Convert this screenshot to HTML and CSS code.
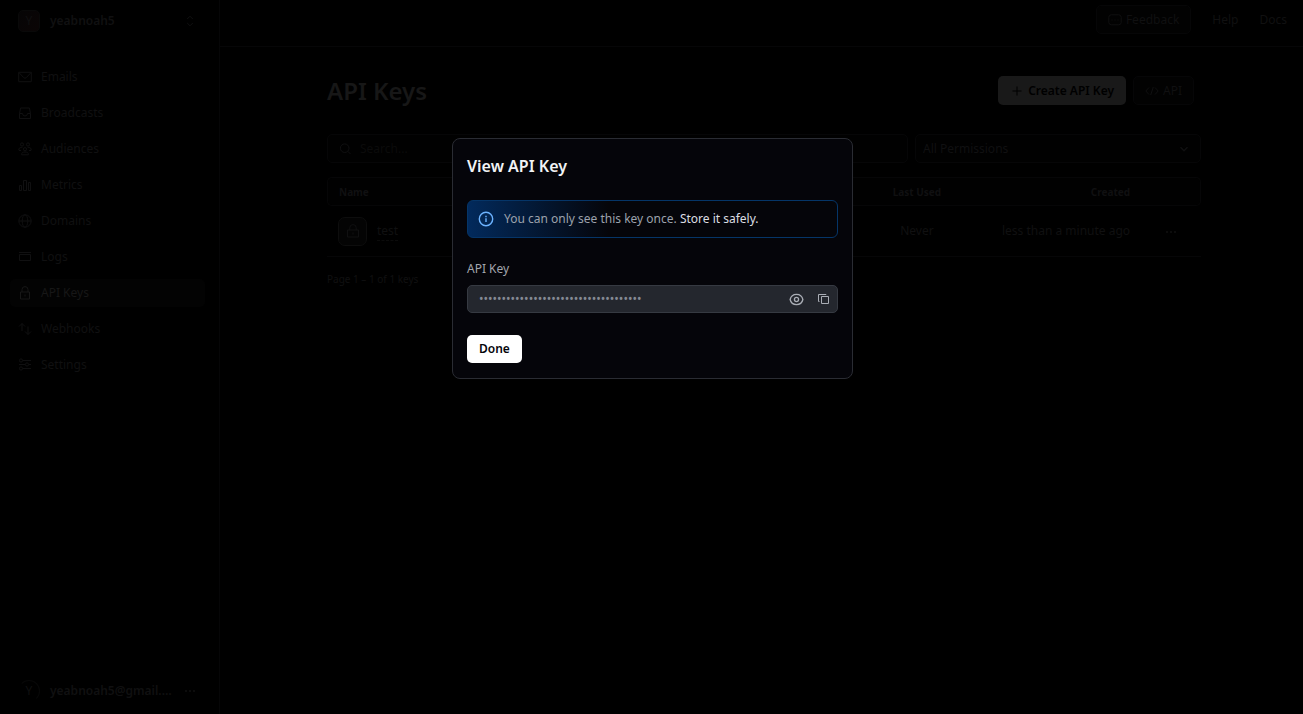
FILE: index.html
```html
<!DOCTYPE html>
<html lang="en">
<head>
<meta charset="utf-8">
<title>API Keys</title>
<link rel="stylesheet" href="styles.css">
</head>
<body>
<div class="app">
  <aside class="sidebar">
    <button class="team" type="button">
      <span class="team-logo">Y</span>
      <span class="account-name">yeabnoah5</span>
      <svg class="icon" viewBox="0 0 14 14"><path d="M4.2 5 7 2.200 9.800 5M4.200 9 7 11.800 9.800 9"/></svg>
    </button>
    <nav class="nav">
      <a class="nav-item" href="#"><svg class="icon" viewBox="0 0 14 14"><path d="M.7 2.300h12.600v9.400H.7zM1 2.600l4.700 5a1.800 1.800 0 0 0 2.600 0l4.700-5"/></svg>Emails</a>
      <a class="nav-item" href="#"><svg class="icon" viewBox="0 0 14 14"><path d="M1.500 7.500 2.600 2h8.800l1.100 5.500v5h-11zM1.500 7.500h3a2.500 2.500 0 0 0 5 0h3"/></svg>Broadcasts</a>
      <a class="nav-item" href="#"><svg class="icon" viewBox="0 0 14 14"><circle cx="4" cy="2.500" r="1.600"/><circle cx="10" cy="2.500" r="1.600"/><circle cx="7" cy="7.200" r="1.600"/><path d="M.8 8.200c0-2 .8-2.700 2.500-2.700h1M13.200 8.200c0-2-.8-2.700-2.500-2.700h-1M1 8.500h2M11 8.500h2M3.600 12.800c0-2 1-2.800 3.400-2.800s3.400.8 3.400 2.800z"/></svg>Audiences</a>
      <a class="nav-item" href="#"><svg class="icon" viewBox="0 0 14 14"><path d="M1.500 7.500h2v5h-2zM5.500 2.500h3v10h-3zM10.500 4.500h2v8h-2z"/></svg>Metrics</a>
      <a class="nav-item" href="#"><svg class="icon" viewBox="0 0 14 14"><circle cx="7" cy="7" r="6.200"/><ellipse cx="7" cy="7" rx="2.800" ry="6.200"/><path d="M.8 7h12.400"/></svg>Domains</a>
      <a class="nav-item" href="#"><svg class="icon" viewBox="0 0 14 14"><path d="M1 2.500h12M1.500 4.500h11v6h-11z"/></svg>Logs</a>
      <a class="nav-item nav-item-active" href="#"><svg class="icon" viewBox="0 0 14 14"><path d="M2.500 6h9v7h-9zM4 6V3.600a3 3 0 0 1 6 0V6M7 8.500v2"/></svg>API Keys</a>
      <a class="nav-item" href="#"><svg class="icon" viewBox="0 0 14 14"><path d="M4 9V1.500M1 4.500l3-3 3 3M10 4.500V12.500M7 9.500l3 3 3-3"/></svg>Webhooks</a>
      <a class="nav-item" href="#"><svg class="icon" viewBox="0 0 14 14"><circle cx="3" cy="2.500" r="1.600"/><circle cx="9" cy="6.500" r="1.600"/><circle cx="3" cy="10.500" r="1.600"/><path d="M4.600 2.500H13M1 6.500h6.400M10.600 6.500H13M4.600 10.500H13"/></svg>Settings</a>
    </nav>
    <button class="user" type="button">
      <span class="avatar">Y</span>
      <span class="account-name">yeabnoah5@gmail.…</span>
      <svg class="icon icon-dots" viewBox="0 0 14 14"><circle cx="3" cy="7" r="1"/><circle cx="7" cy="7" r="1"/><circle cx="11" cy="7" r="1"/></svg>
    </button>
  </aside>

  <div class="main">
    <header class="topbar">
      <button class="btn btn-ghost" type="button"><svg class="icon" viewBox="0 0 14 14"><rect x=".8" y="1.800" width="12.400" height="10" rx="2.500"/><path d="M4 6.500v1M7 6.500v1M10 6.500v1"/></svg>Feedback</button>
      <a class="top-link" href="#">Help</a>
      <a class="top-link" href="#">Docs</a>
    </header>
    <main class="content">
      <div class="heading">
        <h1 class="page-title">API Keys</h1>
        <button class="btn btn-create" type="button"><svg class="icon" viewBox="0 0 14 14"><path d="M7 2.500v9M2.500 7h9"/></svg>Create API Key</button>
        <button class="btn btn-ghost" type="button"><svg class="icon" viewBox="0 0 14 14"><path d="M4 3.500.8 7 4 10.500M10 3.500 13.200 7 10 10.500M8.300 3 5.700 11"/></svg>API</button>
      </div>
      <div class="filters">
        <label class="search">
          <svg class="icon" viewBox="0 0 14 14"><circle cx="6.700" cy="6.200" r="4.300"/><path d="m9.800 9.300 2.700 2.700"/></svg>
          <input class="search-input" type="text" placeholder="Search..." aria-label="Search">
        </label>
        <div class="select-wrap">
          <select class="select" aria-label="Permissions"><option>All Permissions</option></select>
          <svg class="icon select-arrow" viewBox="0 0 14 14"><path d="m3.500 5.200 3.500 3.500 3.500-3.500"/></svg>
        </div>
      </div>
      <table class="keys">
        <thead>
          <tr><th class="col-name">Name</th><th class="col-used">Last Used</th><th class="col-created">Created</th><th class="col-actions"></th></tr>
        </thead>
        <tbody>
          <tr>
            <td><div class="key-cell"><span class="key-icon"><svg class="icon" viewBox="0 0 14 14"><path d="M1.500 6h11v7h-11zM3.800 6V3.800a3.200 3.200 0 0 1 6.400 0V6M7 8.500v2"/></svg></span><a class="key-link" href="#">test</a></div></td>
            <td class="col-used">Never</td>
            <td class="col-created">less than a minute ago</td>
            <td class="col-actions"><button class="more" type="button" aria-label="More"><svg class="icon icon-dots" viewBox="0 0 14 14"><circle cx="3" cy="7" r="1"/><circle cx="7" cy="7" r="1"/><circle cx="11" cy="7" r="1"/></svg></button></td>
          </tr>
        </tbody>
      </table>
      <p class="pager">Page 1 – 1 of 1 keys</p>
    </main>
  </div>
</div>

<div class="overlay">
  <div class="dialog" role="dialog" aria-modal="true" aria-labelledby="dialog-title">
    <h2 class="dialog-title" id="dialog-title">View API Key</h2>
    <div class="notice">
      <svg class="notice-icon" viewBox="0 0 16 16"><circle cx="8" cy="8" r="6.700"/><path d="M8 7.300v3.700M8 4.800v1.400"/></svg>
      <p class="notice-text">You can only see this key once. <strong class="notice-strong">Store it safely.</strong></p>
    </div>
    <label class="field-label" for="api-key">API Key</label>
    <div class="key-field">
      <input class="key-input" id="api-key" type="password" value="re_000000000000000000000000000000000" readonly>
      <button class="icon-btn" type="button" aria-label="Show key"><svg class="icon-eye" viewBox="0 0 16 16"><path d="M1.200 8C2 4.500 4.800 2.500 8 2.500s6 2 6.800 5.500c-.8 3.500-3.600 5.500-6.800 5.500S2 11.500 1.200 8z"/><circle cx="8" cy="8" r="2.200"/></svg></button>
      <button class="icon-btn" type="button" aria-label="Copy key"><svg class="icon-copy" viewBox="0 0 12 12"><path d="M3.500 3.500h7v7h-7zM1.500 8.500h-1v-7h7.500v.5"/></svg></button>
    </div>
    <button class="btn-done" type="button">Done</button>
  </div>
</div>
</body>
</html>
```

FILE: styles.css
```css
* { box-sizing: border-box; }

body {
  margin: 0;
  background: #000;
  color: #101011;
  font: 12px/18px "Noto Sans", "Open Sans", sans-serif;
}

button, input, select { font: inherit; color: inherit; }
button { border: 0; padding: 0; background: none; }
a { color: inherit; text-decoration: none; }

.icon {
  width: 14px;
  height: 14px;
  flex: none;
  fill: none;
  stroke: currentColor;
  stroke-width: 1;
}
.icon-dots { fill: currentColor; stroke: none; }

.app { display: flex; min-height: 100vh; }

/* Sidebar */
.sidebar {
  display: flex;
  flex-direction: column;
  flex: none;
  width: 220px;
  padding: 10px 14px 12px 10px;
  border-right: 1px solid #060607;
}
.team, .user {
  display: flex;
  align-items: center;
  gap: 10px;
  padding: 0 8px;
  text-align: left;
}
.user { margin-top: auto; }
.team-logo, .avatar {
  flex: none;
  width: 22px;
  height: 22px;
  line-height: 20px;
  text-align: center;
  border: 1px solid #090909;
}
.team-logo {
  border-radius: 5px;
  background: linear-gradient(135deg, #060506, #0b0505);
}
.avatar {
  border-radius: 50%;
  border-color: #080808 #080808 #000 #000;
}
.account-name {
  flex: 1;
  white-space: nowrap;
  font-weight: 600;
}
.nav {
  display: flex;
  flex-direction: column;
  gap: 8px;
  margin-top: 31px;
}
.nav-item {
  display: flex;
  align-items: center;
  gap: 9px;
  height: 28px;
  padding: 0 8px;
  border-radius: 5px;
}
.nav-item-active { background: #030303; color: #171717; }

/* Top bar */
.main { flex: 1; min-width: 0; }
.topbar {
  display: flex;
  align-items: center;
  justify-content: flex-end;
  gap: 21px;
  padding: 5px 16px 12px;
  border-bottom: 1px solid #060607;
}
.btn {
  display: flex;
  align-items: center;
  gap: 4px;
  height: 29px;
  padding: 0 11px;
  border: 1px solid transparent;
  border-radius: 5px;
}
.btn-ghost { border-color: #060607; background: #020202; }

/* Content */
.content { padding: 29px 102px 0 107px; }
.heading {
  display: flex;
  align-items: center;
  gap: 7px;
  padding-right: 7px;
}
.page-title {
  flex: 1;
  margin: 0;
  color: #171717;
  font-size: 24px;
  line-height: 29px;
  font-weight: 600;
}
.btn-create {
  background: #191919;
  color: #000;
  font-weight: 600;
}

.filters {
  display: flex;
  gap: 7px;
  margin-top: 29px;
}
.search {
  display: flex;
  flex: 1;
  align-items: center;
  gap: 8px;
  height: 29px;
  padding: 0 10px;
  border: 1px solid #060607;
  border-radius: 5px;
  background: #010101;
}
.search-input {
  flex: 1;
  min-width: 0;
  padding: 0;
  border: 0;
  background: none;
  outline: 0;
}
.search-input::placeholder { color: #0b0b0b; }
.select-wrap {
  display: grid;
  flex: 0 1 286px;
  align-items: center;
}
.select {
  grid-area: 1 / 1;
  height: 29px;
  padding: 0 7px;
  border: 1px solid #060607;
  border-radius: 5px;
  background: #010101;
  appearance: none;
}
.select-arrow {
  grid-area: 1 / 1;
  justify-self: end;
  margin-right: 10px;
  stroke-width: 1.500;
  pointer-events: none;
}

.keys {
  width: 100%;
  margin-top: 14px;
  border-spacing: 0;
  table-layout: fixed;
}
.keys th {
  height: 29px;
  padding: 0;
  border: solid #060607;
  border-width: 1px 0;
  background: #010101;
  font-size: 10px;
  font-weight: 700;
}
.keys td {
  height: 51px;
  padding: 0;
  border-bottom: 1px solid #060607;
}
.keys th:first-child {
  padding-left: 11px;
  border-left-width: 1px;
  border-radius: 5px 0 0 5px;
}
.keys th:last-child {
  border-right-width: 1px;
  border-radius: 0 5px 5px 0;
}
.keys td:first-child { padding-left: 11px; }
.col-name { width: 60%; text-align: left; }
.col-used { width: 15%; text-align: center; }
.keys .col-created { width: 17%; padding-right: 1px; text-align: right; }
.keys .col-actions { width: 8%; padding-left: 10px; text-align: center; }
.key-cell { display: flex; align-items: center; gap: 10px; }
.key-icon {
  display: grid;
  place-items: center;
  width: 29px;
  height: 29px;
  border: 1px solid #0d0d0d;
  border-radius: 7px;
  background: #040404;
}
.key-link { border-bottom: 1px dashed #0b0b0b; }
.more { display: inline-flex; vertical-align: middle; }
.pager { margin: 13px 0 0; font-size: 10px; }

/* Dialog */
.overlay {
  position: fixed;
  inset: 0;
  display: flex;
  align-items: flex-start;
  justify-content: center;
  padding: 138px 0 0 2px;
}
.dialog {
  display: flex;
  flex-direction: column;
  align-items: stretch;
  width: 401px;
  max-width: 100%;
  padding: 15px 14px;
  border: 1px solid #2a2c33;
  border-radius: 8px;
  background: #05050a;
}
.dialog-title {
  margin: 0 0 22px;
  color: #f1f3f5;
  font-size: 16px;
  line-height: 24px;
  font-weight: 600;
}
.notice {
  display: flex;
  align-items: center;
  gap: 10px;
  height: 38px;
  margin-bottom: 22px;
  padding: 0 10px;
  border: 1px solid #053568;
  border-radius: 6px;
  background: linear-gradient(90deg, #022a5c, #05050a 38%);
  color: #9ca2ac;
}
.notice-icon {
  width: 16px;
  height: 16px;
  flex: none;
  fill: none;
  stroke: #6cb3ff;
  stroke-width: 1.400;
}
.notice-text { margin: 0; }
.notice-strong { color: #dcdee2; font-weight: 400; }
.field-label { margin-bottom: 7px; color: #a3a6ad; }
.key-field {
  display: flex;
  align-items: center;
  gap: 14px;
  height: 28px;
  margin-bottom: 22px;
  padding: 0 7px 0 11px;
  border: 1px solid #363a42;
  border-radius: 5px;
  background: #24272e;
  color: #a9adb5;
}
.key-input {
  flex: 1;
  min-width: 0;
  padding: 0;
  border: 0;
  outline: 0;
  background: none;
  color: #858a94;
}
.icon-btn { display: flex; }
.icon-eye, .icon-copy { fill: none; stroke: currentColor; }
.icon-eye { width: 15px; height: 15px; stroke-width: 1.400; }
.icon-copy { width: 12px; height: 12px; stroke-width: 1; }
.btn-done {
  align-self: flex-start;
  height: 28px;
  padding: 0 12px;
  border-radius: 5px;
  background: #fff;
  color: #05050a;
  font-weight: 600;
}
```
